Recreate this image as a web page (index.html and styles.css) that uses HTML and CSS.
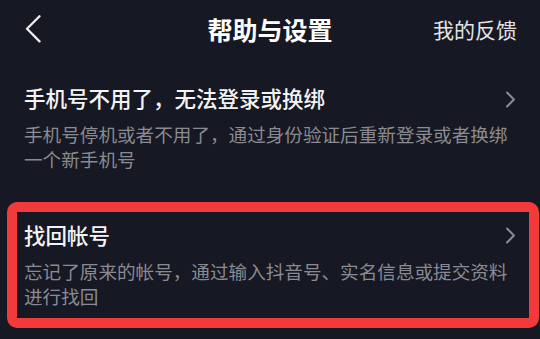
FILE: index.html
```html
<!DOCTYPE html>
<html lang="zh-CN">
<head>
<meta charset="utf-8">
<link rel="stylesheet" href="styles.css">
</head>
<body>
<div class="page">
  <header class="topbar">
    <div class="back">
      <svg width="16" height="28" viewBox="0 0 16 28"><path d="M14.5 1.2 L2 13.8 L14.5 26.4" fill="none" stroke="#ececec" stroke-width="2.3" stroke-linecap="round" stroke-linejoin="round"/></svg>
    </div>
    <div class="title">帮助与设置</div>
    <div class="feedback">我的反馈</div>
  </header>
  <section class="item first">
    <div class="item-head">
      <span class="item-title">手机号不用了，无法登录或换绑</span>
      <svg class="chev" width="11" height="17" viewBox="0 0 11 17"><path d="M2 1.5 L9 8.5 L2 15.5" fill="none" stroke="#8a8b92" stroke-width="2" stroke-linecap="round" stroke-linejoin="round"/></svg>
    </div>
    <p class="item-desc">手机号停机或者不用了，通过身份验证后重新登录或者换绑一个新手机号</p>
  </section>
  <section class="item marked">
    <div class="item-head">
      <span class="item-title">找回帐号</span>
      <svg class="chev" width="11" height="17" viewBox="0 0 11 17"><path d="M2 1.5 L9 8.5 L2 15.5" fill="none" stroke="#8a8b92" stroke-width="2" stroke-linecap="round" stroke-linejoin="round"/></svg>
    </div>
    <p class="item-desc">忘记了原来的帐号，通过输入抖音号、实名信息或提交资料进行找回</p>
  </section>
</div>
</body>
</html>
```
FILE: styles.css
```css
html, body {
  margin: 0;
  padding: 0;
  background: #161823;
}
body {
  font-family: "Noto Sans CJK SC", "Noto Sans", sans-serif;
  color: #ffffff;
  width: 540px;
  height: 339px;
  overflow: hidden;
}
.page {
  width: 540px;
}
.topbar {
  display: grid;
  grid-template-columns: 1fr auto 1fr;
  align-items: center;
  height: 58px;
}
.back {
  padding-left: 25px;
  display: flex;
  align-items: center;
}
.back svg { display: block; }
.title {
  font-size: 25px;
  font-weight: 700;
  color: #ffffff;
  line-height: 30px;
}
.feedback {
  justify-self: end;
  padding-right: 23px;
  font-size: 21px;
  line-height: 30px;
  color: #e4e4e6;
}
.item {
  padding: 0 23px 0 24px;
}
.item.first {
  margin-top: 25px;
}
.item.marked {
  margin-top: 49px;
  position: relative;
}
.item.marked::after {
  content: "";
  position: absolute;
  left: 7px;
  top: -18px;
  width: 532px;
  height: 126px;
  box-sizing: border-box;
  border: 10px solid #f33a3a;
  border-radius: 10px;
  pointer-events: none;
}
.item-head {
  display: flex;
  align-items: center;
  justify-content: space-between;
  height: 30px;
}
.item-title {
  font-size: 21.5px;
  font-weight: 500;
  line-height: 30px;
  color: #f4f4f5;
}
.chev {
  display: block;
  margin-right: 1px;
}
.first .chev { margin-top: 3px; }
.item-desc {
  margin: 9px 0 0;
  font-size: 18.6px;
  line-height: 24.5px;
  color: #8a8b92;
}
```
